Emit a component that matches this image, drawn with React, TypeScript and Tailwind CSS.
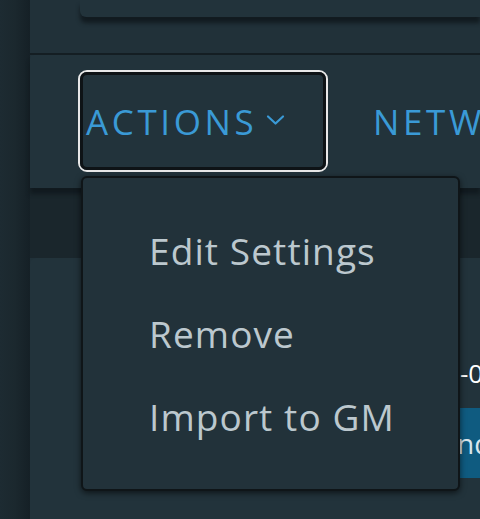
import React from "react";

export default function App() {
  const font = { fontFamily: '"Open Sans", "Noto Sans", sans-serif' };
  return (
    <div className="relative w-[480px] h-[519px] overflow-hidden flex bg-[#213139]" style={font}>
      {/* left strip */}
      <div className="w-[30px] h-full bg-gradient-to-r from-[#1d2b32] via-[#1b282e] to-[#152026] shrink-0" />
      {/* main column */}
      <div className="flex-1 min-w-0 flex flex-col">
        {/* top area */}
        <div className="h-[53px] flex flex-col">
          <div className="flex">
            <div className="w-[50px]" />
            <div className="flex-1 h-[17px] bg-[#22333b] rounded-bl-[6px] shadow-[0_6px_4px_#121b20]" />
          </div>
        </div>
        <div className="h-[2px] bg-[#141e23]" />
        {/* toolbar card */}
        <div className="h-[133px] min-w-0 overflow-hidden bg-[#22333b] rounded-tl-[4px] shadow-[0_6px_4px_#111a1f] flex items-start pt-[15px] pl-[48px] gap-[45px] z-10">
          <div className="w-[250px] shrink-0 h-[102px] rounded-[9px] border-2 border-[#e8e8e8]">
            <div className="w-full h-full rounded-[7px] border-[3px] border-[#0e1316] flex items-center pl-[3px]">
              <span className="text-[35px] tracking-[3.6px] text-[#3a9ad6] font-medium leading-none">ACTIONS</span>
              <svg width="19" height="12" viewBox="0 0 19 12" className="ml-[9px] mt-[-3px]">
                <path d="M2 2.5 L9.5 9.5 L17 2.5" stroke="#3a9ad6" strokeWidth="2.2" fill="none" strokeLinecap="round" strokeLinejoin="round" />
              </svg>
            </div>
          </div>
          <div className="h-[102px] shrink-0 flex items-center">
            <span className="text-[35px] tracking-[3.6px] text-[#3a9ad6] font-medium leading-none whitespace-nowrap">NETWORK</span>
          </div>
        </div>
        {/* gap */}
        <div className="h-[70px] bg-[#1a262c]" />
        {/* lower card */}
        <div className="flex-1 bg-[#22333b] rounded-tl-[6px] flex justify-end overflow-hidden">
          <div className="w-[20px] shrink-0 flex flex-col pt-[102px]">
            <span className="text-[26px] text-white leading-none whitespace-nowrap">-0</span>
            <div className="mt-[22px] h-[70px] bg-[#0f5b80] flex items-center overflow-hidden">
              <span className="text-[28px] text-[#d9e6ec] leading-none -ml-[3px] whitespace-nowrap">nd</span>
            </div>
          </div>
        </div>
      </div>
      {/* dropdown menu */}
      <div className="absolute z-20 left-[81px] top-[176px] w-[379px] h-[315px] bg-[#22323a] border-2 border-[#0f1518] rounded-[6px] shadow-[0_2px_6px_rgba(0,0,0,0.6)] pt-[31px] pl-[66px]">
        {["Edit Settings", "Remove", "Import to GM"].map((t) => (
          <div key={t} className="h-[83px] flex items-center text-[37px] tracking-[1.1px] text-[#bcc8ce] leading-none whitespace-nowrap">
            {t}
          </div>
        ))}
      </div>
    </div>
  );
}
